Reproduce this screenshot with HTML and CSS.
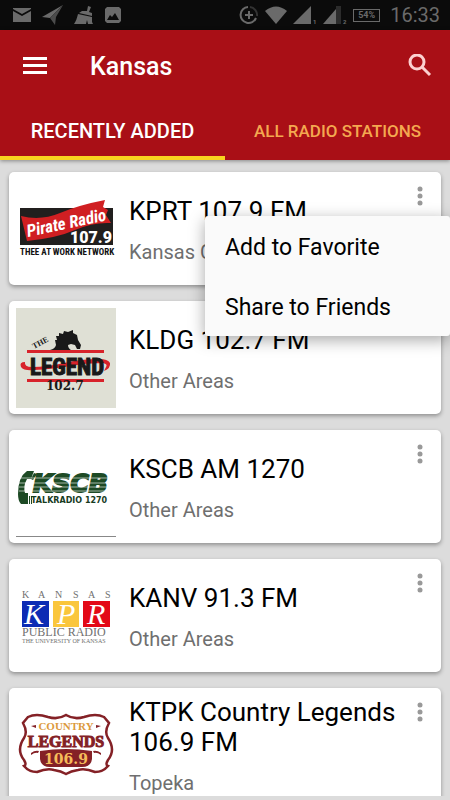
FILE: index.html
```html
<!DOCTYPE html>
<html lang="en">
<head>
    <meta charset="utf-8">
    <meta name="viewport" content="width=device-width, initial-scale=1">
    <title>Kansas</title>
    <link rel="stylesheet" href="styles.css">
</head>
<body>
    <!-- Phone status bar -->
    <div class="status-bar">
        <div class="status-left">
            <svg width="20" height="16" viewBox="0 0 20 16"><path d="M1 1h18v1l-9 5-9-5z M1 4l9 5 9-5v11H1z"/></svg>
            <svg width="22" height="20" viewBox="0 0 22 20"><path d="M21 0L0 12l8 1z"/><path class="dim" d="M21 0L8 13l5 7 1-8z"/></svg>
            <svg width="20" height="20" viewBox="0 0 20 20"><path d="M14 1l3 1-2 5 3 1v3L5 8l3-2 5 0zM4 9l14 3v5l1 2h-5l-1-4-1 4H0c2-3 3-6 4-10z"/></svg>
            <svg width="18" height="18" viewBox="0 0 18 18"><path fill-rule="evenodd" d="M3 1h12l2 2v12l-2 2H3l-2-2V3zM3 14h12l-4-7-3 4-2-2z"/></svg>
        </div>
        <div class="status-right">
            <svg width="20" height="20" viewBox="0 0 20 20"><path class="ring" d="M9 2a8 8 0 1 0 8 11"/><path class="ring dark" d="M11 2a8 8 0 0 1 7 9"/><path class="plus" d="M10 6v8M6 10h8"/></svg>
            <svg width="22" height="18" viewBox="0 0 22 18"><path d="M0 5q11-9 22 0L11 18z"/></svg>
            <svg width="24" height="18" viewBox="0 0 24 18"><path d="M18 0v18H0z"/><text x="20" y="18">1</text></svg>
            <svg width="24" height="18" viewBox="0 0 24 18"><path class="dark-fill" d="M13 0h5v18h-5z"/><path d="M13 3v15H0z"/><text x="20" y="18">2</text></svg>
            <span class="battery">54%</span>
            <span class="clock">16:33</span>
        </div>
    </div>

    <header class="header">
        <div class="toolbar">
            <button type="button" class="icon-button" aria-label="Menu">
                <svg width="24" height="18" viewBox="0 0 24 18"><path d="M0 0h24v3H0zM0 7h24v3H0zM0 14h24v3H0z"/></svg>
            </button>
            <h1>Kansas</h1>
            <button type="button" class="icon-button" aria-label="Search">
                <svg class="search" width="24" height="24" viewBox="0 0 24 24"><circle cx="9" cy="8" r="7"/><path d="M14 13l8 8"/></svg>
            </button>
        </div>
        <nav class="tabs">
            <a href="#recent" class="tab active">RECENTLY ADDED</a>
            <a href="#all" class="tab">ALL RADIO STATIONS</a>
        </nav>
    </header>

    <main class="list" id="recent">
        <article class="card">
            <svg class="logo" viewBox="0 0 100 100">
                <path fill="#211f1e" d="M4 29h93v37H4z"/>
                <path fill="#d01f22" d="M5 37q20 5 39-3t45-13l-2 7 5 3-2 5 5 8q-18-1-36 7T11 62z"/>
                <text class="brush" x="12" y="58" font-size="17" transform="rotate(-12 12 58)">Pirate Radio</text>
                <text class="heavy" x="54" y="64" font-size="16" fill="#fff">107.9</text>
                <text class="narrow" x="4" y="76" font-size="9" fill="#111">THEE AT WORK NETWORK</text>
            </svg>
            <div class="info">
                <h2>KPRT 107.9 FM</h2>
                <p>Kansas City</p>
            </div>
            <div class="more">
                <button type="button" class="more-button" aria-label="Options for KPRT"><svg width="6" height="20" viewBox="0 0 6 20"><circle cx="3" cy="3" r="2.5"/><circle cx="3" cy="10" r="2.5"/><circle cx="3" cy="17" r="2.5"/></svg></button>
                <div class="popup">
                    <button type="button">Add to Favorite</button>
                    <button type="button">Share to Friends</button>
                </div>
            </div>
        </article>

        <article class="card">
            <svg class="logo" viewBox="0 0 100 100">
                <path fill="#dfe0d5" d="M0 0h100v100H0z"/>
                <path fill="#191919" d="M34 42q5-1 6-5l-1-5 2 0-1-4 3 0 0-3 4 1 1-3 4 1 5-2 0 3 4 2 1 5 3 5-1 4-3 0-2-4-4-1-3 1q0 4 5 6z"/>
                <path fill="#d8232b" d="M11 42h77v3H11zM11 71h77v3H11z"/>
                <path fill="#d8232b" d="M9 54q-6 0-4 5 3 4 13 3 20-1 36-4t33-3q5 1 3 4l-2 4q7-3 6-8-2-4-11-4-18 0-35 4t-32 4q-8 0-7-5z"/>
                <text class="narrow" x="14" y="67" font-size="23" fill="#191919" stroke="#191919" stroke-width="1">LEGEND</text>
                <text class="serif" x="18" y="41" font-size="8" fill="#191919" transform="rotate(-28 18 41)">THE</text>
                <text class="slab" x="30" y="82" font-size="12" fill="#191919">102.7</text>
            </svg>
            <div class="info">
                <h2>KLDG 102.7 FM</h2>
                <p>Other Areas</p>
            </div>
            <div class="more">
                <button type="button" class="more-button" aria-label="Options for KLDG"><svg width="6" height="20" viewBox="0 0 6 20"><circle cx="3" cy="3" r="2.5"/><circle cx="3" cy="10" r="2.5"/><circle cx="3" cy="17" r="2.5"/></svg></button>
            </div>
        </article>

        <article class="card">
            <svg class="logo" viewBox="0 0 100 100">
                <path fill="#1d4a25" d="M11 34h7l-3 8H11q-4 7-2 14h3v11H5q-3-3-3-10 0-17 9-23zM13 59h1v8h-1zM15 59h1v8h-1zM18 36l3 1-4 6-2-1z"/>
                <text class="wide" x="17" y="55" font-size="25" font-style="italic" fill="#1d4a25" stroke="#1d4a25" stroke-width="2">KSCB</text>
                <path stroke="#fff" stroke-width="1" opacity=".6" d="M3 41h95M3 46h95M3 50h95M3 54h95"/>
                <text class="wide" x="15" y="66" font-size="8" fill="#173b1e">TALKRADIO 1270</text>
                <path fill="#888" d="M0 99h100v1H0z"/>
            </svg>
            <div class="info">
                <h2>KSCB AM 1270</h2>
                <p>Other Areas</p>
            </div>
            <div class="more">
                <button type="button" class="more-button" aria-label="Options for KSCB"><svg width="6" height="20" viewBox="0 0 6 20"><circle cx="3" cy="3" r="2.5"/><circle cx="3" cy="10" r="2.5"/><circle cx="3" cy="17" r="2.5"/></svg></button>
            </div>
        </article>

        <article class="card">
            <svg class="logo" viewBox="0 0 100 100">
                <text class="roman" x="6 22 39 57 72 89" y="32" font-size="10">KANSAS</text>
                <path fill="#0c2bb4" d="M6 35h27v26H6z"/>
                <path fill="#fac63c" d="M37 35h26v26H37z"/>
                <path fill="#e30917" d="M67 35h27v26H67z"/>
                <text class="script" x="8 41 71" y="58" font-size="30">KPR</text>
                <text class="roman" x="6" y="70" font-size="12">PUBLIC RADIO</text>
                <text class="roman" x="6" y="77" font-size="6">THE UNIVERSITY OF KANSAS</text>
            </svg>
            <div class="info">
                <h2>KANV 91.3 FM</h2>
                <p>Other Areas</p>
            </div>
            <div class="more">
                <button type="button" class="more-button" aria-label="Options for KANV"><svg width="6" height="20" viewBox="0 0 6 20"><circle cx="3" cy="3" r="2.5"/><circle cx="3" cy="10" r="2.5"/><circle cx="3" cy="17" r="2.5"/></svg></button>
            </div>
        </article>

        <article class="card">
            <svg class="logo" viewBox="0 0 100 100">
                <path fill="#fff" stroke="#842126" stroke-width="2.5" d="M50 20q8 5 18 2 12-4 20 0l5 6q-5 9-1 15 8 12 0 22-3 5 0 6-5 6-13 6-10-4-17-2-7 1-12 4-5-3-12-4-7-2-17 2-8 0-13-6 3-1 0-6-8-10 0-22 4-6-1-15l5-6q8-4 20 0 10 3 18-2z"/>
                <path fill="#842126" d="M24 56q26-4 52 0v8q-1 8-10 8H34q-9 0-10-8zM15 31l5-1v3zM85 31l-5-1v3zM15 58q4-3 8-2l-1 2q-3-1-7 2zM85 58q-4-3-8-2l1 2q3-1 7 2z"/>
                <text class="serif" x="50" y="35" font-size="11" text-anchor="middle" fill="#dc9a3c">COUNTRY</text>
                <text class="serif" x="50" y="52" font-size="16" text-anchor="middle" fill="#842126" stroke="#842126" stroke-width="1">LEGENDS</text>
                <text class="slab" x="50" y="69" font-size="14" text-anchor="middle" fill="#f6bd5b">106.9</text>
            </svg>
            <div class="info">
                <h2>KTPK Country Legends 106.9 FM</h2>
                <p>Topeka</p>
            </div>
            <div class="more">
                <button type="button" class="more-button" aria-label="Options for KTPK"><svg width="6" height="20" viewBox="0 0 6 20"><circle cx="3" cy="3" r="2.5"/><circle cx="3" cy="10" r="2.5"/><circle cx="3" cy="17" r="2.5"/></svg></button>
            </div>
        </article>
    </main>
</body>
</html>
```
FILE: styles.css
```css
* {
    box-sizing: border-box;
}
body {
    font-family: Roboto, sans-serif;
    margin: 0;
    display: flex;
    flex-direction: column;
    height: 100vh;
    padding-bottom: 4px;
    background: #dcdcdc;
    overflow: hidden;
}
h1, h2, p {
    margin: 0;
    font-weight: 400;
}
button {
    font: inherit;
    border: none;
    background: none;
    padding: 0;
    cursor: pointer;
}
svg {
    display: block;
}

/* status bar */
.status-bar {
    flex: none;
    display: flex;
    justify-content: space-between;
    align-items: center;
    height: 30px;
    padding: 0 10px 0 12px;
    background: #0b0b0b;
    color: #6a6a6a;
}
.status-bar svg {
    fill: #6a6a6a;
}
.status-bar text {
    font-size: 6px;
    font-weight: 700;
}
.status-left {
    display: flex;
    align-items: center;
    gap: 10px;
}
.status-right {
    display: flex;
    align-items: center;
    gap: 6px;
}
.status-bar .dim {
    fill: #4c4c4c;
}
.status-bar .dark-fill {
    fill: #2c2c2c;
}
.status-bar .ring {
    fill: none;
    stroke: #6a6a6a;
    stroke-width: 2;
}
.status-bar .dark {
    stroke: #333;
}
.plus {
    stroke: #6a6a6a;
    stroke-width: 2;
}
.battery {
    width: 27px;
    margin-right: 4px;
    border: 1px solid #6a6a6a;
    font-size: 9px;
    font-weight: 700;
    line-height: 11px;
    text-align: center;
}
.clock {
    font-size: 20px;
}

/* header */
.header {
    flex: none;
    position: relative;
    background: #a90f16;
    box-shadow: 0 1px 4px rgba(0, 0, 0, 0.4);
}
.toolbar {
    display: flex;
    align-items: center;
    height: 72px;
    padding: 0 18px 0 23px;
}
.icon-button svg {
    fill: #fff;
}
.icon-button .search {
    fill: none;
    stroke: #fcd0d0;
    stroke-width: 3;
}
h1 {
    flex: 1;
    padding-left: 43px;
    color: #fff;
    font-size: 25px;
    font-weight: 500;
}
.tabs {
    display: flex;
    height: 58px;
}
.tab {
    flex: 1;
    border-bottom: 4px solid transparent;
    color: #f4a850;
    font-size: 17px;
    font-weight: 500;
    line-height: 58px;
    text-align: center;
    text-decoration: none;
}
.tab.active {
    border-color: #f8d41f;
    color: #fff;
    font-size: 20px;
}

/* station list */
.list {
    flex: 1;
    min-height: 0;
    overflow: hidden;
    display: flex;
    flex-direction: column;
    gap: 16px;
    padding: 12px 9px 0;
}
.card {
    flex: none;
    position: relative;
    display: flex;
    align-items: center;
    gap: 13px;
    min-height: 113px;
    padding: 6px 18px 6px 7px;
    border-radius: 5px;
    background: #fff;
    box-shadow: 0 2px 4px rgba(0, 0, 0, 0.35);
}
.logo {
    flex: none;
    width: 100px;
    height: 100px;
}
.info {
    flex: 1;
    padding-top: 2px;
}
.info h2 {
    margin-right: -12px;
    color: #000;
    font-size: 26px;
    line-height: 30px;
}
.info p {
    margin-top: 14px;
    color: #6f6f6f;
    font-size: 20px;
    line-height: 24px;
}
.more {
    align-self: flex-start;
    padding-top: 8px;
}
.more-button svg {
    fill: #999;
}
.popup {
    position: absolute;
    z-index: 2;
    top: 44px;
    right: -9px;
    width: 245px;
    border-radius: 3px;
    background: #fafafa;
    box-shadow: 0 4px 16px rgba(0, 0, 0, 0.35);
}
.card:first-child {
    z-index: 1;
}
.popup button {
    display: block;
    width: 100%;
    height: 60px;
    padding: 2px 20px 0;
    color: #000;
    font-size: 23px;
    text-align: left;
}

/* lettering in the station logos */
.narrow {
    font-family: "Liberation Sans Narrow", "Roboto Condensed", "Open Sans Condensed", Roboto, sans-serif;
    font-weight: 700;
}
.brush {
    font-family: "Liberation Sans Narrow", "Roboto Condensed", Roboto, sans-serif;
    font-weight: 700;
    font-style: italic;
    fill: #fff;
}
.heavy {
    font-family: Roboto, sans-serif;
    font-weight: 900;
}
.serif {
    font-family: "Liberation Serif", serif;
    font-weight: 700;
}
.slab {
    font-family: "DejaVu Serif", serif;
    font-weight: 700;
}
.wide {
    font-family: "DejaVu Sans", sans-serif;
    font-weight: 700;
}
.roman {
    font-family: "Liberation Serif", serif;
    fill: #707070;
}
.script {
    font-family: "Liberation Serif", serif;
    font-style: italic;
    fill: #fff;
}
```
